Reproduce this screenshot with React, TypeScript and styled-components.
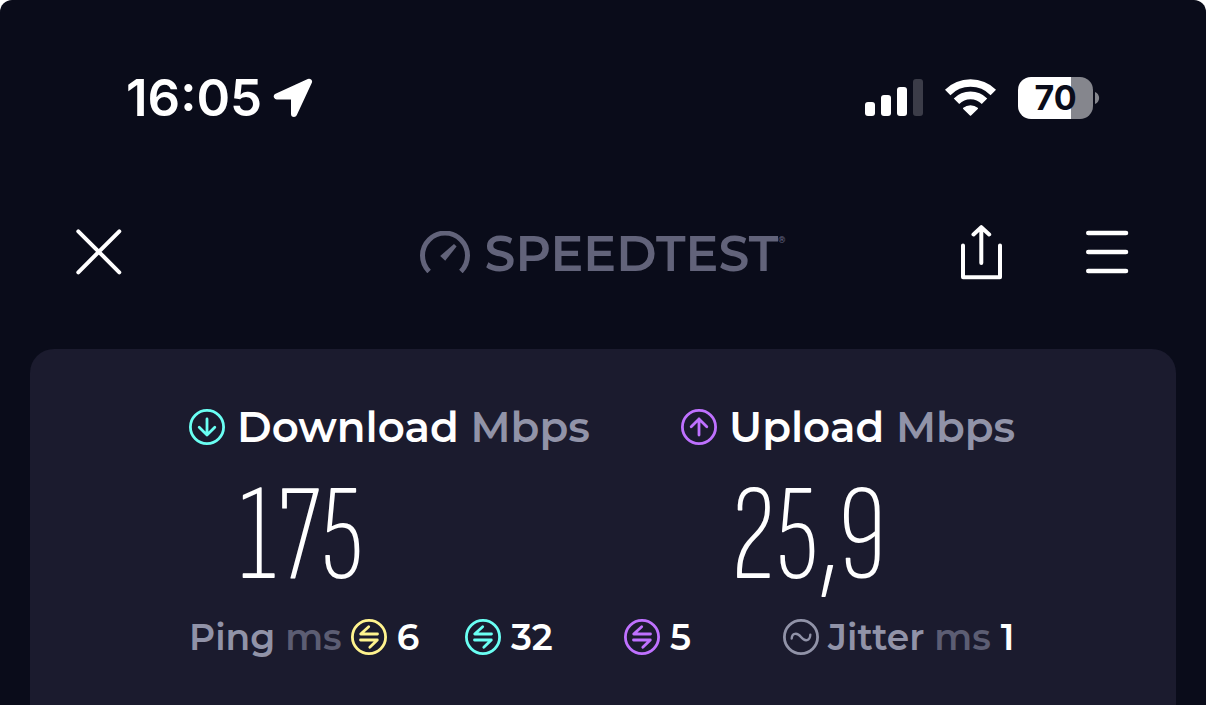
import React from "react";
import styled, { createGlobalStyle } from "styled-components";

const color = {
  page: "#0a0c1a",
  card: "#1b1b2e",
  white: "#ffffff",
  logo: "#62637a",
  label: "#9193a8",
  faint: "#5c5d73",
  teal: "#6afff3",
  purple: "#bf71ff",
  yellow: "#fff38e",
};

const GlobalStyle = createGlobalStyle`
  *, *::before, *::after { box-sizing: border-box; }
  html { background: #fff; }
  body {
    margin: 0;
    font-family: Montserrat, Inter, "Liberation Sans", sans-serif;
    color: ${color.white};
  }
  h1, h2, p, dl, dt, dd { margin: 0; font: inherit; }
  svg { display: block; flex: none; }
`;

const Screen = styled.div`
  min-height: 100vh;
  display: flex;
  flex-direction: column;
  padding: 68px 30px 0;
  background: ${color.page};
  border-radius: 12px 12px 0 0;
`;

const StatusBar = styled.div`
  display: flex;
  align-items: center;
  justify-content: space-between;
  padding: 0 76px 0 96px;
  height: 60px;
`;

const Clock = styled.div`
  display: flex;
  align-items: center;
  gap: 11px;
  font: 600 51px/60px Inter, "Liberation Sans", sans-serif;
`;

const Indicators = styled.div`
  display: flex;
  align-items: center;
  gap: 22px;
`;

const BatteryWrap = styled.div`
  display: flex;
  align-items: center;
  gap: 2px;
`;

const BatteryBody = styled.div<{ $level: number }>`
  width: 75px;
  height: 42px;
  border-radius: 13px;
  background: linear-gradient(
    90deg,
    ${color.white} ${(p) => p.$level}%,
    #85868d ${(p) => p.$level}%
  );
  color: ${color.page};
  font: 700 34px/42px Inter, "Liberation Sans", sans-serif;
  text-align: center;
`;

const TopBar = styled.header`
  display: grid;
  grid-template-columns: 1fr auto 1fr;
  align-items: center;
  height: 60px;
  margin: 94px 0 67px;
  padding: 0 47px 0 46px;
`;

const Actions = styled.div`
  display: flex;
  justify-content: flex-end;
  align-items: center;
  gap: 82px;
`;

const IconButton = styled.button`
  display: flex;
  justify-self: start;
  padding: 0;
  border: 0;
  background: none;
  color: ${color.white};
  cursor: pointer;
`;

const Brand = styled.h1`
  display: flex;
  align-items: center;
  gap: 15px;
  color: ${color.logo};
`;

const BrandName = styled.span`
  display: flex;
  padding-top: 4px;
  font-size: 49px;
  line-height: 56px;
  font-weight: 600;
`;

const Registered = styled.sup`
  font-size: 9px;
  line-height: 28px;
  vertical-align: baseline;
`;

const Card = styled.main`
  flex: 1;
  padding: 54px 159px 48px;
  background: ${color.card};
  border-radius: 24px 24px 0 0;
`;

const Speeds = styled.div`
  display: grid;
  grid-template-columns: 492fr 336fr;
`;

const SpeedTitle = styled.h2`
  display: flex;
  align-items: center;
  gap: 12px;
  font-size: 42px;
  line-height: 48px;
  font-weight: 600;
  white-space: nowrap;
`;

const Unit = styled.span`
  color: ${color.label};
`;

const SpeedValue = styled.p`
  margin: 26px 0 20px;
  padding-left: 50px;
  font: 200 138px/120px "Sofia Sans Extra Condensed", "Roboto Condensed", "Liberation Sans Narrow", sans-serif;
`;

const Latency = styled.dl`
  display: grid;
  grid-template-columns: 276fr 159fr 159fr 234fr;
  font-size: 36px;
  line-height: 40px;
  font-weight: 600;
  white-space: nowrap;
`;

const Stat = styled.div`
  display: flex;
  align-items: center;
  gap: 10px;
`;

const StatLabel = styled.dt`
  display: flex;
  align-items: center;
  gap: 9px;
  color: ${color.label};
`;

const Faint = styled.span`
  color: ${color.faint};
`;

const LocationArrow = () => (
  <svg width="40" height="40" viewBox="0 0 40 40" aria-hidden="true">
    <path
      d="M36 3.800L3.800 18.500H21V36Z"
      fill="currentColor"
      stroke="currentColor"
      strokeWidth="6"
      strokeLinejoin="round"
    />
  </svg>
);

const Signal = () => (
  <svg width="58" height="38" viewBox="0 0 58 38" fill="currentColor" role="img" aria-label="Signal">
    <rect x="0" y="23" width="10" height="14" rx="3" />
    <rect x="16" y="16" width="10" height="21" rx="3" />
    <rect x="32" y="8" width="10" height="29" rx="3" />
    <rect x="48" y="0" width="10" height="37" rx="3" fill="#3b3c48" />
  </svg>
);

const Wifi = () => (
  <svg width="51" height="38" viewBox="0 0 51 38" fill="none" stroke="currentColor" role="img" aria-label="Wi-Fi">
    <path d="M2.700 13.400A32.300 32.300 0 0 1 48.300 13.400" strokeWidth="7.700" />
    <path d="M11.500 22.200A19.800 19.800 0 0 1 39.500 22.200" strokeWidth="7.700" />
    <path
      d="M25.500 36L18.800 29.400A10.400 10.400 0 0 1 32.200 29.400Z"
      fill="currentColor"
      strokeWidth="1.600"
      strokeLinejoin="round"
    />
  </svg>
);

const BatteryTip = () => (
  <svg width="5" height="14" viewBox="0 0 5 14" aria-hidden="true">
    <path d="M0 1C5.500 3 5.500 11 0 13Z" fill="#85868d" />
  </svg>
);

const CloseIcon = () => (
  <svg width="46" height="46" viewBox="0 0 46 46" fill="none" stroke="currentColor" strokeWidth="4" strokeLinecap="round">
    <path d="M2.300 2.300L43.300 43.300M43.300 2.300L2.300 43.300" />
  </svg>
);

const ShareIcon = () => (
  <svg width="43" height="56" viewBox="0 0 43 56" fill="none" stroke="currentColor" strokeWidth="4" strokeLinecap="round" strokeLinejoin="round">
    <path d="M3 21.500V53.300H40V21.500M21.300 3.500V39M13.500 10.500L21.300 3.200L29.200 10.500" />
  </svg>
);

const MenuIcon = () => (
  <svg width="44" height="44" viewBox="0 0 44 44" fill="none" stroke="currentColor" strokeWidth="4.600" strokeLinecap="round">
    <path d="M3.300 3H41M3.300 22H41M3.300 41H41" />
  </svg>
);

const Gauge = () => (
  <svg width="50" height="42" viewBox="0 0 50 42" aria-hidden="true">
    <path d="M9.100 40.500A22.500 22.500 0 1 1 40.900 40.500" fill="none" stroke="currentColor" strokeWidth="5" />
    <path d="M34 13L36.600 15.500L25.200 29.700L20.200 25Z" fill="currentColor" />
  </svg>
);

const glyphs = {
  down: "M18 10V26M10.200 18.300L18 26L25.800 18.300",
  up: "M18 26V10M10.200 17.700L18 10L25.800 17.700",
  ping: "M26.500 15H9.700L17.700 7.700M9.500 21H26.300L18.800 28.300",
  jitter: "M8.700 19.500C9 14 14 13 18 18S27 22 27.300 15.800",
};

const CircleIcon = ({ glyph, tint }: { glyph: keyof typeof glyphs; tint: string }) => (
  <svg width="36" height="36" viewBox="0 0 36 36" fill="none" stroke={tint} strokeLinecap="round" strokeLinejoin="round" aria-hidden="true">
    <circle cx="18" cy="18" r="16.600" strokeWidth="2.800" />
    <path d={glyphs[glyph]} strokeWidth={glyph === "jitter" ? 2.4 : 2.8} />
  </svg>
);

interface SpeedProps {
  name: string;
  value: string;
  glyph: "down" | "up";
  tint: string;
}

const Speed = ({ name, value, glyph, tint }: SpeedProps) => (
  <section>
    <SpeedTitle>
      <CircleIcon glyph={glyph} tint={tint} />
      <span>
        {name} <Unit>Mbps</Unit>
      </span>
    </SpeedTitle>
    <SpeedValue>{value}</SpeedValue>
  </section>
);

export default function App() {
  return (
    <>
      <GlobalStyle />
      <Screen>
        <StatusBar>
          <Clock>
            16:05
            <LocationArrow />
          </Clock>
          <Indicators>
            <Signal />
            <Wifi />
            <BatteryWrap>
              <BatteryBody $level={71}>70</BatteryBody>
              <BatteryTip />
            </BatteryWrap>
          </Indicators>
        </StatusBar>
        <TopBar>
          <IconButton type="button" aria-label="Close">
            <CloseIcon />
          </IconButton>
          <Brand>
            <Gauge />
            <BrandName>
              SPEEDTEST
              <Registered>®</Registered>
            </BrandName>
          </Brand>
          <Actions>
            <IconButton type="button" aria-label="Share">
              <ShareIcon />
            </IconButton>
            <IconButton type="button" aria-label="Menu">
              <MenuIcon />
            </IconButton>
          </Actions>
        </TopBar>
        <Card>
          <Speeds>
            <Speed name="Download" value="175" glyph="down" tint={color.teal} />
            <Speed name="Upload" value="25,9" glyph="up" tint={color.purple} />
          </Speeds>
          <Latency>
            <Stat>
              <StatLabel>
                <span>
                  Ping <Faint>ms</Faint>
                </span>
                <CircleIcon glyph="ping" tint={color.yellow} />
              </StatLabel>
              <dd>6</dd>
            </Stat>
            <Stat>
              <StatLabel aria-label="Download ping">
                <CircleIcon glyph="ping" tint={color.teal} />
              </StatLabel>
              <dd>32</dd>
            </Stat>
            <Stat>
              <StatLabel aria-label="Upload ping">
                <CircleIcon glyph="ping" tint={color.purple} />
              </StatLabel>
              <dd>5</dd>
            </Stat>
            <Stat>
              <StatLabel>
                <CircleIcon glyph="jitter" tint={color.label} />
                <span>
                  Jitter <Faint>ms</Faint>
                </span>
              </StatLabel>
              <dd>1</dd>
            </Stat>
          </Latency>
        </Card>
      </Screen>
    </>
  );
}
